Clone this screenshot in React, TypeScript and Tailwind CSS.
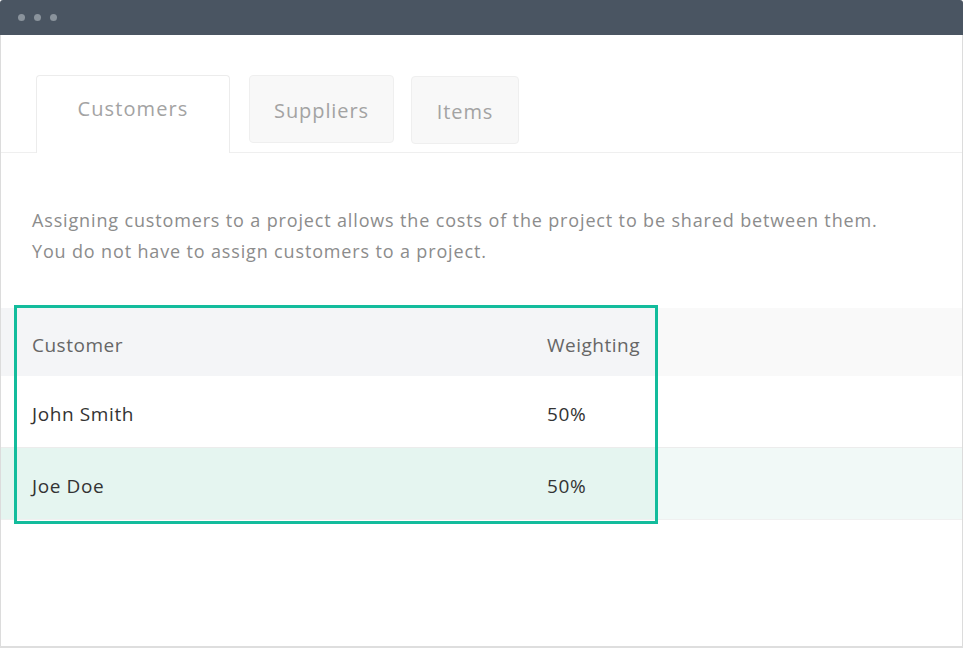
import React from "react";

export default function App() {
  const font = { fontFamily: '"Open Sans", "Noto Sans", sans-serif' };
  return (
    <div className="w-[964px] h-[649px] bg-white" style={font}>
      <div className="w-[963px] h-[648px] flex flex-col rounded-t-[3px] overflow-hidden border-b-2 border-[#dedede]">
        <div className="h-[35px] bg-[#4a5562] flex items-center gap-[9px] pl-[18px] shrink-0">
          <span className="w-[7px] h-[7px] rounded-full bg-[#8a939c]" />
          <span className="w-[7px] h-[7px] rounded-full bg-[#8a939c]" />
          <span className="w-[7px] h-[7px] rounded-full bg-[#8a939c]" />
        </div>
        <div className="flex-1 border-x border-[#dcdcdc] flex flex-col">
          <div className="pt-[40px] border-b border-[#efefef] flex items-start pl-[35px]">
            <div className="w-[194px] h-[78px] -mb-px bg-white border border-b-0 border-[#ececec] rounded-t-[4px] flex justify-center pt-[18px] text-[20px] tracking-[1.1px] text-[#a3a3a3]">
              Customers
            </div>
            <div className="ml-[19px] w-[145px] h-[68px] bg-[#f8f8f8] border border-[#efefef] rounded-[4px] flex items-center justify-center text-[20px] tracking-[0.9px] text-[#a3a3a3] pt-[4px]">
              Suppliers
            </div>
            <div className="ml-[17px] mt-px w-[108px] h-[68px] bg-[#f8f8f8] border border-[#efefef] rounded-[4px] flex items-center justify-center text-[20px] tracking-[0.9px] text-[#a3a3a3] pt-[4px]">
              Items
            </div>
          </div>
          <div className="pl-[31px] pt-[52px] text-[18px] tracking-[0.85px] leading-[31px] text-[#8c8c8c]">
            <p>Assigning customers to a project allows the costs of the project to be shared between them.</p>
            <p>You do not have to assign customers to a project.</p>
          </div>
          <div className="relative mt-[41px]">
            <div className="flex h-[68px] bg-[#f9f9f9] text-[19px] tracking-[0.5px] text-[#666]">
              <div className="w-[654px] bg-[#f4f5f7] flex items-center pl-[31px] pt-[6px]">
                <span className="w-[515px]">Customer</span>
                <span>Weighting</span>
              </div>
            </div>
            <div className="flex h-[72px] bg-white border-b border-[#ececec] text-[19px] tracking-[0.6px] text-[#333]">
              <div className="w-[654px] flex items-center pl-[31px] pt-[6px]">
                <span className="w-[515px]">John Smith</span>
                <span>50%</span>
              </div>
            </div>
            <div className="flex h-[72px] bg-[#f1f9f7] border-b border-[#f0f0f0] text-[19px] tracking-[0.6px] text-[#333]">
              <div className="w-[654px] bg-[#e5f5f0] flex items-center pl-[31px] pt-[6px]">
                <span className="w-[515px]">Joe Doe</span>
                <span>50%</span>
              </div>
            </div>
            <div className="absolute left-[13px] top-[-3px] w-[644px] h-[219px] border-[3px] border-[#13bc9c] pointer-events-none" />
          </div>
        </div>
      </div>
    </div>
  );
}
